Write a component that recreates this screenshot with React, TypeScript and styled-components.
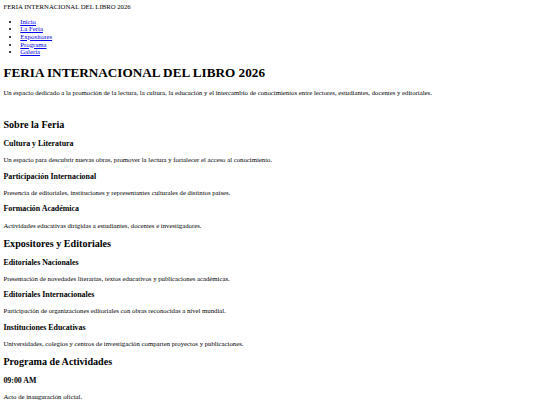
import styled, { createGlobalStyle } from 'styled-components'

const GlobalStyle = createGlobalStyle`
    body {
        margin: 3.375px;
        font-family: "Liberation Serif", "Times New Roman", serif;
        font-size: 6.75px;
        line-height: 7.6px;
        color: #000;
        background: #fff;
    }
`

const Header = styled.header`
    display: block;
`

const Brand = styled.div`
    font-size: 1em;
`

const NavList = styled.ul`
    margin: 6.75px 0;
    padding-left: 16.875px;
    list-style: disc;

    li a {
        color: #0000ee;
        text-decoration: underline;
    }
`

const Hero = styled.section`
    padding-bottom: 7px;
`

const Title = styled.h1`
    font-size: 13.2px;
    line-height: 15.6px;
    font-weight: bold;
    margin: 9.05px 0;
`

const Text = styled.p`
    margin: 6.75px 0;
`

const Section = styled.section`
    display: block;
`

const SectionTitle = styled.h2`
    font-size: 10.125px;
    line-height: 11.6px;
    font-weight: bold;
    margin: 8.4px 0;
`

const ItemTitle = styled.h3`
    font-size: 7.9px;
    line-height: 9.3px;
    font-weight: bold;
    margin: 7.9px 0;
`

const Article = styled.article`
    display: block;
`

interface IItem {
    title: string,
    text: string
}

const sections: { title: string, items: IItem[] }[] = [
    {
        title: 'Sobre la Feria',
        items: [
            { title: 'Cultura y Literatura', text: 'Un espacio para descubrir nuevas obras, promover la lectura y fortalecer el acceso al conocimiento.' },
            { title: 'Participación Internacional', text: 'Presencia de editoriales, instituciones y representantes culturales de distintos países.' },
            { title: 'Formación Académica', text: 'Actividades educativas dirigidas a estudiantes, docentes e investigadores.' },
        ]
    },
    {
        title: 'Expositores y Editoriales',
        items: [
            { title: 'Editoriales Nacionales', text: 'Presentación de novedades literarias, textos educativos y publicaciones académicas.' },
            { title: 'Editoriales Internacionales', text: 'Participación de organizaciones editoriales con obras reconocidas a nivel mundial.' },
            { title: 'Instituciones Educativas', text: 'Universidades, colegios y centros de investigación comparten proyectos y publicaciones.' },
        ]
    },
    {
        title: 'Programa de Actividades',
        items: [
            { title: '09:00 AM', text: 'Acto de inauguración oficial.' },
            { title: '11:00 AM', text: 'Presentación de libros y conversatorios con autores.' },
        ]
    },
]

const links = ['Inicio', 'La Feria', 'Expositores', 'Programa', 'Galería']

export default function App() {
    return (
        <>
            <GlobalStyle />
            <Header>
                <Brand>FERIA INTERNACIONAL DEL LIBRO 2026</Brand>
                <nav>
                    <NavList>
                        {links.map(l => (
                            <li key={l}><a href="#">{l}</a></li>
                        ))}
                    </NavList>
                </nav>
            </Header>
            <main>
                <Hero>
                    <Title>FERIA INTERNACIONAL DEL LIBRO 2026</Title>
                    <Text>Un espacio dedicado a la promoción de la lectura, la cultura, la educación y el intercambio de conocimientos entre lectores, estudiantes, docentes y editoriales.</Text>
                </Hero>
                {sections.map(s => (
                    <Section key={s.title}>
                        <SectionTitle>{s.title}</SectionTitle>
                        {s.items.map(i => (
                            <Article key={i.title}>
                                <ItemTitle>{i.title}</ItemTitle>
                                <Text>{i.text}</Text>
                            </Article>
                        ))}
                    </Section>
                ))}
            </main>
        </>
    )
}
